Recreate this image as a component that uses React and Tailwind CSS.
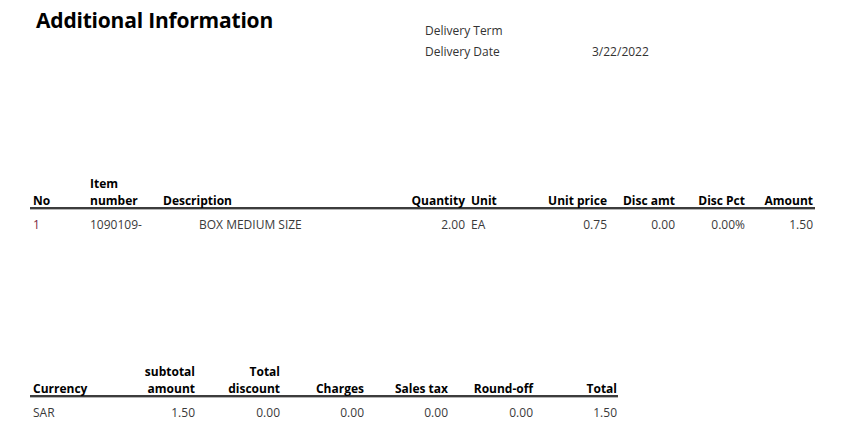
export default function App() {
  const items = [
    {
      no: '1',
      itemNumber: '1090109-',
      description: 'BOX MEDIUM SIZE',
      quantity: '2.00',
      unit: 'EA',
      unitPrice: '0.75',
      discAmt: '0.00',
      discPct: '0.00%',
      amount: '1.50',
    },
  ];

  const th = 'font-bold text-black text-[12px] leading-[17px] flex items-end';
  const td = 'text-[12px] leading-[17px] text-[#3a3a3a]';

  return (
    <div className="w-[853px] h-[428px] bg-white font-['Open_Sans','Liberation_Sans',sans-serif] overflow-hidden">
      {/* Header */}
      <div className="flex">
        <h1 className="w-[425px] pl-[36px] mt-[6px] text-[21px] leading-[28px] font-bold text-black tracking-[-0.2px]">
          Additional Information
        </h1>
        <div className="mt-[20px] text-[12px] leading-[21px] text-[#333]">
          <div className="flex">
            <span className="w-[167px]">Delivery Term</span>
          </div>
          <div className="flex">
            <span className="w-[167px]">Delivery Date</span>
            <span>3/22/2022</span>
          </div>
        </div>
      </div>

      {/* Lines */}
      <div className="ml-[30px] mt-[113px] w-[785px]">
        <div className="grid grid-cols-[58px_73px_236px_70px_73px_69px_68px_70px_68px] h-[34px] border-b-2 border-[#3c3c3c] shadow-[0_1px_0_#b5b5b5]">
          <div className={`${th} pl-[3px]`}>No</div>
          <div className={`${th} pl-[2px]`}>Item<br />number</div>
          <div className={`${th} pl-[2px]`}>Description</div>
          <div className={`${th} justify-end pr-[2px]`}>Quantity</div>
          <div className={`${th} pl-[4px]`}>Unit</div>
          <div className={`${th} justify-end pr-[2px]`}>Unit price</div>
          <div className={`${th} justify-end pr-[2px]`}>Disc amt</div>
          <div className={`${th} justify-end pr-[2px]`}>Disc Pct</div>
          <div className={`${th} justify-end pr-[2px]`}>Amount</div>
        </div>
        {items.map((it) => (
          <div
            key={it.no}
            className="grid grid-cols-[58px_73px_236px_70px_73px_69px_68px_70px_68px] pt-[7px]"
          >
            <div className={`${td} pl-[3px] text-[#7b1f45]`}>{it.no}</div>
            <div className={`${td} pl-[2px]`}>{it.itemNumber}</div>
            <div className={`${td} pl-[38px]`}>{it.description}</div>
            <div className={`${td} text-right pr-[2px]`}>{it.quantity}</div>
            <div className={`${td} pl-[4px]`}>{it.unit}</div>
            <div className={`${td} text-right pr-[2px]`}>{it.unitPrice}</div>
            <div className={`${td} text-right pr-[2px]`}>{it.discAmt}</div>
            <div className={`${td} text-right pr-[2px]`}>{it.discPct}</div>
            <div className={`${td} text-right pr-[2px]`}>{it.amount}</div>
          </div>
        ))}
      </div>

      {/* Totals */}
      <div className="ml-[30px] mt-[130px] w-[588px]">
        <div className="grid grid-cols-[82px_85px_85px_84px_84px_85px_83px] h-[34px] border-b-2 border-[#3c3c3c] shadow-[0_1px_0_#b5b5b5]">
          <div className={`${th} pl-[3px]`}>Currency</div>
          <div className={`${th} justify-end text-right pr-[2px]`}>subtotal<br />amount</div>
          <div className={`${th} justify-end text-right pr-[2px]`}>Total<br />discount</div>
          <div className={`${th} justify-end pr-[2px]`}>Charges</div>
          <div className={`${th} justify-end pr-[2px]`}>Sales tax</div>
          <div className={`${th} justify-end pr-[2px]`}>Round-off</div>
          <div className={`${th} justify-end pr-[1px]`}>Total</div>
        </div>
        <div className="grid grid-cols-[82px_85px_85px_84px_84px_85px_83px] pt-[7px]">
          <div className={`${td} pl-[3px]`}>SAR</div>
          <div className={`${td} text-right pr-[2px]`}>1.50</div>
          <div className={`${td} text-right pr-[2px]`}>0.00</div>
          <div className={`${td} text-right pr-[2px]`}>0.00</div>
          <div className={`${td} text-right pr-[2px]`}>0.00</div>
          <div className={`${td} text-right pr-[2px]`}>0.00</div>
          <div className={`${td} text-right pr-[1px]`}>1.50</div>
        </div>
      </div>
    </div>
  );
}
